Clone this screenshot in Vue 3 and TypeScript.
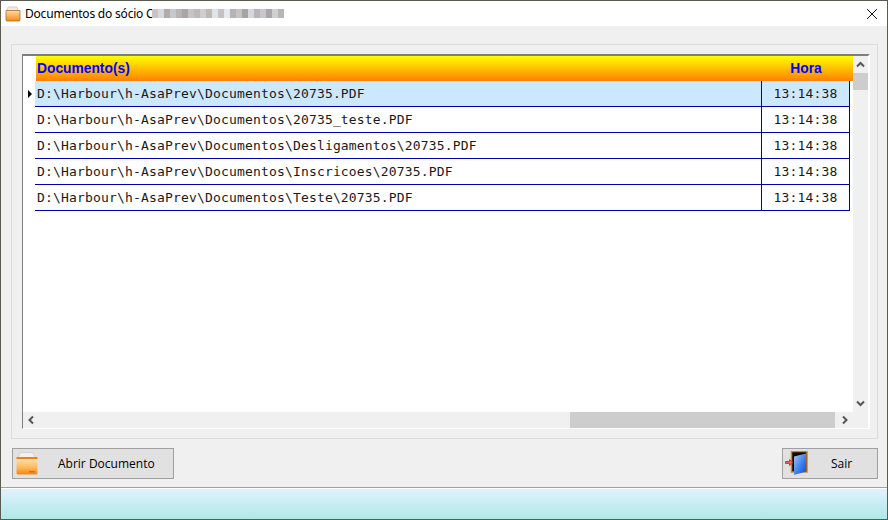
<script setup lang="ts">
const rows = [
  'D:\\Harbour\\h-AsaPrev\\Documentos\\20735.PDF',
  'D:\\Harbour\\h-AsaPrev\\Documentos\\20735_teste.PDF',
  'D:\\Harbour\\h-AsaPrev\\Documentos\\Desligamentos\\20735.PDF',
  'D:\\Harbour\\h-AsaPrev\\Documentos\\Inscricoes\\20735.PDF',
  'D:\\Harbour\\h-AsaPrev\\Documentos\\Teste\\20735.PDF'
]
const blur = ['#c9c5c5','#d6dade','#b3aaaa','#c6c9cc','#b9b3b3','#a9a5a8','#c8c4c4','#bdb9bc','#cfcdce','#bcb8b4','#dfe4e8','#c3c3c6','#e6eaee','#b5b3b5','#c6c4c2','#a8a4a2','#d4d8dc','#b9b4bb','#c8c6c8','#a9a6ac','#d2d0ce','#b6b6ba']
</script>

<template>
  <div class="window">
    <header class="titlebar">
      <svg class="title-icon" width="16" height="16" viewBox="0 0 16 16">
        <defs>
          <linearGradient id="tf" x1="0" y1="0" x2="0" y2="1"><stop offset="0" stop-color="#ffdca8"/><stop offset="1" stop-color="#f48c18"/></linearGradient>
        </defs>
        <path d="M3 1h9l1 4H2z" fill="#efece8" stroke="#bdb8b0" stroke-width=".6"/>
        <path d="M1 4.500h14V14a1 1 0 0 1-1 1H2a1 1 0 0 1-1-1z" fill="url(#tf)" stroke="#a85c18" stroke-width=".7"/>
      </svg>
      <span class="title-text">Documentos do sócio C</span>
      <span class="blur">
        <i v-for="(c, i) in blur" :key="i" :style="{ background: c }"></i>
      </span>
      <svg class="close" width="12" height="12" viewBox="0 0 12 12"><path d="M1 1l10 10M11 1L1 11" stroke="#111" stroke-width="1" fill="none"/></svg>
    </header>

    <main class="content">
      <section class="panel">
        <div class="grid">
          <div class="grid-main">
            <div class="table">
              <div class="head-row">
                <div class="head-doc">Documento(s)</div>
                <div class="head-time">Hora</div>
              </div>
              <div v-for="(r, i) in rows" :key="r" class="row" :class="{ selected: i === 0 }">
                <div class="indicator"><span v-if="i === 0" class="arrow"></span></div>
                <div class="cell-doc">{{ r }}</div>
                <div class="cell-time">13:14:38</div>
              </div>
            </div>
            <div class="vscroll">
              <svg width="15" height="9" viewBox="0 0 15 9"><path d="M4 6.500l3.500-3.500 3.500 3.500" fill="none" stroke="#555" stroke-width="2"/></svg>
              <div class="vthumb"></div>
              <div class="spacer"></div>
              <svg width="15" height="9" viewBox="0 0 15 9"><path d="M4 2.500l3.500 3.500 3.500-3.500" fill="none" stroke="#555" stroke-width="2"/></svg>
            </div>
          </div>
          <div class="hscroll">
            <svg width="14" height="16" viewBox="0 0 14 16"><path d="M10 4.500L6.500 8l3.500 3.500" fill="none" stroke="#555" stroke-width="2"/></svg>
            <div class="htrack"></div>
            <div class="hthumb"></div>
            <svg width="18" height="16" viewBox="0 0 18 16"><path d="M8 4.500L11.500 8 8 11.500" fill="none" stroke="#555" stroke-width="2"/></svg>
          </div>
        </div>
      </section>

      <div class="actions">
        <button class="btn open">
          <svg class="btn-icon" width="24" height="26" viewBox="0 0 24 26">
            <defs>
              <linearGradient id="bf" x1="0" y1="0" x2="0" y2="1"><stop offset="0" stop-color="#ffe0ae"/><stop offset=".5" stop-color="#ffc06a"/><stop offset="1" stop-color="#f5860e"/></linearGradient>
            </defs>
            <path d="M5 1.500h13l2 5H3z" fill="#f2f0ec" stroke="#cfcbc4" stroke-width=".8"/>
            <path d="M1.500 7h21v15a1.500 1.500 0 0 1-1.500 1.500H3A1.500 1.500 0 0 1 1.500 22z" fill="url(#bf)"/>
            <rect x="1.500" y="6" width="21" height="2" fill="#e8841c"/>
            <rect x="14" y="20" width="6" height="1.500" fill="#c8741e"/>
          </svg>
          <span>Abrir Documento</span>
        </button>
        <button class="btn exit">
          <svg class="btn-icon" width="30" height="26" viewBox="0 0 30 26">
            <defs>
              <linearGradient id="dr" x1="0" y1="0" x2="1" y2="1"><stop offset="0" stop-color="#a8c8f6"/><stop offset=".55" stop-color="#3f80ee"/><stop offset="1" stop-color="#0a4be0"/></linearGradient>
            </defs>
            <rect x="7.500" y=".5" width="15.500" height="20.500" fill="#0c0805" stroke="#d0842a" stroke-width="1.500"/>
            <path d="M10 24l12-3.500V2.500L10 5.500z" fill="url(#dr)"/>
            <path d="M1.500 10.500h4V8.500l3.500 3-3.500 3v-2h-4z" fill="#f06070" stroke="#d02030" stroke-width=".8"/>
          </svg>
          <span>Sair</span>
        </button>
      </div>
    </main>

    <footer class="statusbar"></footer>
  </div>
</template>

<style>
html, body { margin: 0; background: #f0f0f0; }
</style>

<style scoped>
.window {
  width: 888px; height: 520px; box-sizing: border-box;
  border: 1px solid #5a5a4e; display: flex; flex-direction: column;
  background: #f0f0f0; overflow: hidden;
}
.titlebar {
  height: 25px; background: #fff; display: flex; align-items: center;
  padding-left: 4px; flex: none;
}
.title-icon { margin-right: 4px; }
.title-text { font: 12px "Noto Sans", sans-serif; color: #000; letter-spacing: -.2px; }
.blur { display: flex; height: 9px; margin-left: -1px; }
.blur i { width: 6px; height: 9px; display: block; }
.close { margin-left: auto; margin-right: 9px; }
.content { flex: 1; display: flex; flex-direction: column; padding: 18px 9px 0 10px; min-height: 0; }
.panel {
  height: 395px; box-sizing: border-box; border: 1px solid #dcdcdc;
  padding: 9px 7px 9px 10px; flex: none;
}
.grid {
  height: 100%; box-sizing: border-box; display: flex; flex-direction: column;
  border-top: 2px solid #808080; border-left: 1px solid #808080;
  border-right: 2px solid #fff; border-bottom: 1px solid #fff; background: #fff;
}
.grid-main { flex: 1; display: flex; min-height: 0; }
.table { flex: 1; background: #fff; min-width: 0; }
.head-row {
  margin-left: 13px; height: 25px; display: flex;
  background: linear-gradient(#ffff00, #ff8000);
  font: bold 13.8px/25px "Liberation Sans", Arial, sans-serif; color: #0000ff;
}
.head-doc { flex: 1; padding-left: 1px; }
.head-time { width: 91px; text-align: center; padding-right: 3px; box-sizing: border-box; }
.row { display: flex; height: 26px; box-sizing: border-box; }
.indicator { width: 12px; flex: none; position: relative; }
.arrow {
  position: absolute; left: 5px; top: 9px; width: 0; height: 0;
  border-left: 4px solid #000; border-top: 4px solid transparent; border-bottom: 4px solid transparent;
}
.cell-doc, .cell-time {
  font: 13px/25px "DejaVu Sans Mono", monospace; letter-spacing: .17px; color: #1a1a1a;
  border-bottom: 1px solid #0000aa; box-sizing: border-box; background: #fff;
}
.cell-doc { width: 727px; padding-left: 2px; border-right: 1px solid #0000aa; flex: none; }
.cell-time { width: 88px; text-align: center; border-right: 1px solid #0000aa; flex: none; }
.selected .cell-doc, .selected .cell-time { background: #cce8ff; }
.vscroll { width: 15px; flex: none; background: #f0f0f0; display: flex; flex-direction: column; }
.vscroll svg { display: block; flex: none; margin-top: 4px; margin-bottom: 4px; }
.vthumb { height: 17px; background: #cdcdcd; flex: none; }
.spacer { flex: 1; }
.hscroll { height: 16px; background: #f0f0f0; display: flex; align-items: center; flex: none; }
.hscroll svg { display: block; flex: none; }
.htrack { width: 533px; height: 16px; flex: none; }
.hthumb { width: 265px; height: 16px; background: #cdcdcd; flex: none; }
.actions { display: flex; justify-content: space-between; margin-top: 9px; padding: 0 0 0 1px; }
.btn {
  height: 31px; box-sizing: border-box; border: 1px solid #a0a0a0; background: #e1e1e1;
  display: flex; align-items: center; padding: 0; position: relative;
  font: 12px "Open Sans", "Noto Sans", sans-serif; color: #000; cursor: default;
}
.open { width: 162px; }
.exit { width: 96px; }
.btn-icon { flex: none; }
.open .btn-icon { margin-left: 2px; }
.open span { margin-left: 19px; }
.exit .btn-icon { margin-left: 1px; }
.exit span { margin-left: 17px; }
.statusbar {
  flex: none; height: 32px; box-sizing: border-box;
  border-top: 1px solid #a0a0a0;
  background: linear-gradient(#e3f2fd, #aee8e8);
  box-shadow: inset 0 1px 0 #fff;
}
</style>
